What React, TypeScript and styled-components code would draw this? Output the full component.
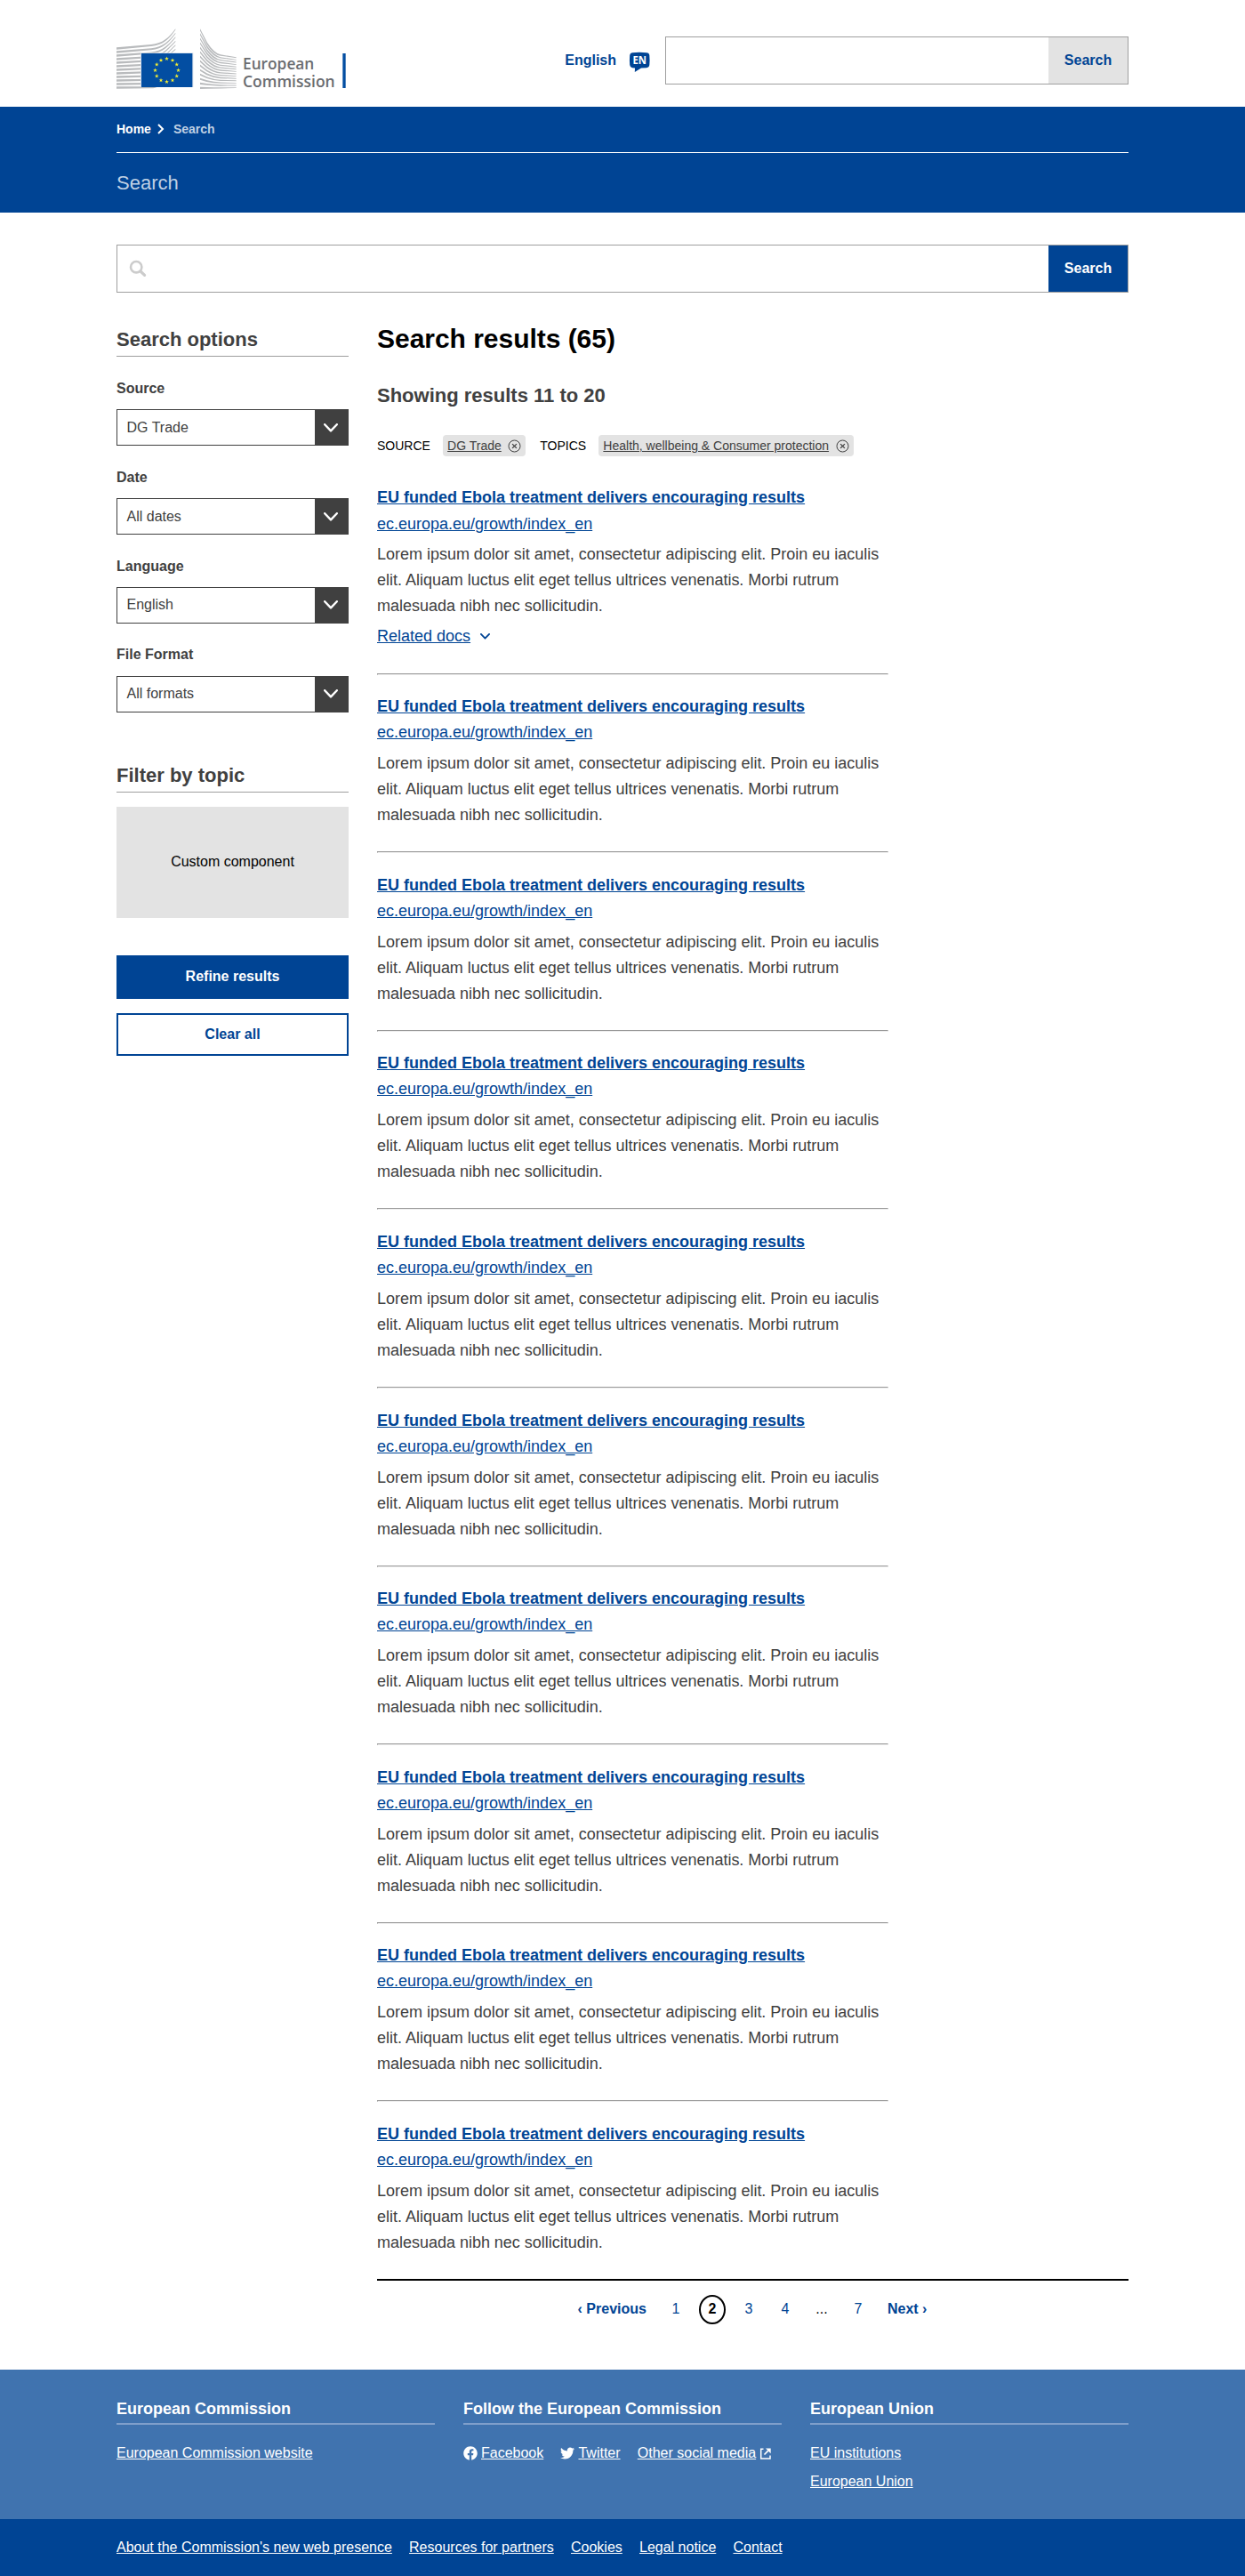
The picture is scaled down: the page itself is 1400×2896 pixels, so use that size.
import React from "react";
import styled, { createGlobalStyle, css } from "styled-components";
import { FaFacebook, FaTwitter } from "react-icons/fa";

const blue = "#004494";
const grey = "#404040";
const midGrey = "#9f9f9f";
const lightGrey = "#e3e3e3";

const GlobalStyle = createGlobalStyle`
  *, *::before, *::after { box-sizing: border-box; }
  body {
    margin: 0;
    background: #fff;
    color: ${grey};
    font-family: Arial, "Liberation Sans", sans-serif;
    font-size: 16px;
    line-height: 19px;
  }
  h1, h2, h3, p, ul { margin: 0; padding: 0; }
  ul { list-style: none; }
  svg { display: block; flex: none; }
`;

const Container = styled.div`
  width: 1138px;
  margin: 0 auto;
`;

/* ---------- header ---------- */

const HeaderBar = styled(Container)`
  display: flex;
  align-items: flex-start;
  height: 120px;
`;

const Logo = styled.a`
  margin-top: 31px;
`;

const LanguageLink = styled.a`
  display: flex;
  align-items: flex-start;
  gap: 14px;
  margin: 58px 17px 0 auto;
  color: ${blue};
  font-weight: 700;
`;

const SearchForm = styled.form<{ $width: string }>`
  display: flex;
  width: ${(p) => p.$width};
  height: 54px;
  border: 1px solid ${midGrey};
  background: #fff;
`;

const SearchField = styled.label`
  display: flex;
  flex: 1;
  align-items: center;
  padding-left: 13px;
`;

const SearchInput = styled.input`
  flex: 1;
  min-width: 0;
  border: 0;
  outline: 0;
  font: inherit;
  background: transparent;
`;

const SearchButton = styled.button<{ $primary?: boolean }>`
  width: 89px;
  border: 0;
  padding: 0 0 1px;
  font: inherit;
  font-weight: 700;
  color: ${(p) => (p.$primary ? "#fff" : blue)};
  background: ${(p) => (p.$primary ? blue : lightGrey)};
`;

const HeaderSearch = styled.div`
  margin-top: 41px;
`;

/* ---------- banner ---------- */

const Banner = styled.div`
  height: 119px;
  background: ${blue};
  color: #bfd0e4;
`;

const Breadcrumb = styled.nav`
  display: flex;
  align-items: center;
  height: 52px;
  padding-bottom: 2px;
  border-bottom: 1px solid #fff;
  font-size: 14px;
  font-weight: 700;
  line-height: 16px;
`;

const HomeLink = styled.a`
  margin-right: 7px;
  color: #fff;
`;

const Current = styled.span`
  margin-left: 10px;
`;

const BannerTitle = styled.div`
  padding-top: 21px;
  font-size: 22px;
  line-height: 25px;
`;

/* ---------- page body ---------- */

const Main = styled(Container)`
  padding-top: 36px;
`;

const Columns = styled.div`
  display: grid;
  grid-template-columns: 261px 845px;
  column-gap: 32px;
  height: 2335px;
`;

const Sidebar = styled.aside`
  padding-top: 40px;
`;

const SideHeading = styled.h2`
  padding-bottom: 6px;
  border-bottom: 1px solid ${midGrey};
  font-size: 22px;
  line-height: 25px;
`;

const Fields = styled.div`
  display: flex;
  flex-direction: column;
  gap: 25.45px;
  padding: 26.1px 0 58.3px;
`;

const Field = styled.div`
  display: flex;
  flex-direction: column;
  gap: 14.3px;
`;

const Label = styled.div`
  font-weight: 700;
`;

const Select = styled.div`
  display: flex;
  height: 41px;
  border: 1px solid ${grey};
`;

const SelectValue = styled.div`
  flex: 1;
  padding: 9.5px 0 0 10.5px;
`;

const SelectArrow = styled.div`
  display: flex;
  align-items: center;
  justify-content: center;
  width: 37px;
  padding-right: 1px;
  background: ${grey};
`;

const CustomBox = styled.div`
  display: flex;
  align-items: center;
  justify-content: center;
  height: 125px;
  margin: 16px 0 42px;
  padding-bottom: 2px;
  background: ${lightGrey};
  color: #000;
`;

const Button = styled.button<{ $outline?: boolean }>`
  display: block;
  width: 100%;
  height: 49px;
  padding: 0 0 1px;
  border: 2px solid ${blue};
  background: ${blue};
  color: #fff;
  font: inherit;
  font-weight: 700;
  ${(p) =>
    p.$outline &&
    css`
      height: 48px;
      margin-top: 16px;
      background: #fff;
      color: ${blue};
    `}
`;

/* ---------- results ---------- */

const Results = styled.main`
  padding-top: 34px;
`;

const PageHeading = styled.h1`
  color: #000;
  font-size: 30px;
  line-height: 35px;
  letter-spacing: -0.03px;
`;

const Showing = styled.h2`
  margin-top: 34px;
  font-size: 22px;
  line-height: 25px;
`;

const FilterRow = styled.div`
  display: flex;
  align-items: center;
  margin-top: 32px;
  font-size: 14px;
  line-height: 16px;
`;

const FilterName = styled.span`
  color: #000;
`;

const Tag = styled.span`
  display: flex;
  align-items: center;
  gap: 7.5px;
  height: 24px;
  margin: 0 16px 0 14.2px;
  padding: 0 5px;
  border-radius: 4px;
  background: ${lightGrey};
  text-decoration: underline;
`;

const List = styled.div`
  width: 575px;
  margin-top: 32.2px;
  font-size: 18px;
  line-height: 29px;
`;

const Divider = styled.hr`
  height: 2px;
  margin: 0 0 21.6px;
  border: 1px solid;
  border-color: #999 #eee #eee #999;
`;

const Result = styled.article`
  padding-bottom: 26px;
`;

const ResultTitle = styled.h3<{ $first?: boolean }>`
  color: ${blue};
  font-size: 18px;
  text-decoration: underline;
  padding-bottom: ${(p) => (p.$first ? 1 : 0)}px;
`;

const ResultUrl = styled.a`
  display: block;
  color: ${blue};
  text-decoration: underline;
`;

const Summary = styled.p<{ $first?: boolean }>`
  padding-top: ${(p) => (p.$first ? 5 : 6)}px;
  letter-spacing: -0.015px;
`;

const Related = styled.div`
  display: flex;
  align-items: center;
  gap: 11px;
  padding: 5px 0 0.4px;
  color: ${blue};
  span { text-decoration: underline; }
`;

const Pagination = styled.nav`
  display: flex;
  justify-content: center;
  gap: 18px;
  padding: 16px 1px 0 0;
  border-top: 2px solid #000;
  color: ${blue};
`;

const Pages = styled.div`
  display: flex;
  gap: 11px;
`;

const Page = styled.span<{ $kind?: "current" | "gap" }>`
  display: flex;
  align-items: center;
  justify-content: center;
  width: 30px;
  height: 33px;
  padding-bottom: 2px;
  ${(p) => p.$kind === "gap" && css`color: #000;`}
  ${(p) =>
    p.$kind === "current" &&
    css`
      border: 2px solid #000;
      border-radius: 50%;
      color: #000;
      font-weight: 700;
    `}
`;

const Step = styled.a`
  padding-top: 6px;
  font-weight: 700;
`;

/* ---------- footer ---------- */

const FooterTop = styled.footer`
  height: 168px;
  padding-top: 33px;
  background: #4073af;
  color: #fff;
`;

const FooterColumns = styled(Container)`
  display: grid;
  grid-template-columns: repeat(3, 358px);
  column-gap: 32px;
`;

const FooterHeading = styled.h3`
  margin-bottom: 22px;
  padding-bottom: 5px;
  border-bottom: 2px solid #7f9fcb;
  font-size: 18px;
  line-height: 22px;
`;

const LinkList = styled.ul<{ $row?: boolean }>`
  display: flex;
  flex-direction: ${(p) => (p.$row ? "row" : "column")};
  gap: ${(p) => (p.$row ? "19.2px" : "13px")};
`;

const LinkItem = styled.li`
  display: flex;
  align-items: center;
  gap: 4px;
  white-space: nowrap;
`;

const Link = styled.a`
  text-decoration: underline;
`;

const FooterBottom = styled.div`
  height: 64px;
  padding-top: 22px;
  background: ${blue};
  color: #fff;
`;

/* ---------- drawings ---------- */

const leftBands = Array.from({ length: 12 }, (_, i) => {
  const y = 100 + i * 12;
  const end = 37 + i * 13.5;
  const bend = Math.max(0, 1 - i / 11);
  const c1 = y - 10 * bend;
  const c2 = y - 14 * bend;
  return `M33 ${y} L150 ${c1} C190 ${c2} 210 ${end + 30 * bend} 232 ${end}
    L232 ${end + 3.5} C210 ${end + 36 * bend} 190 ${c2 + 6} 150 ${c1 + 6} L33 ${y + 7} Z`;
});

const rightBands = Array.from({ length: 14 }, (_, i) => {
  const y = 37 + i * 15.1;
  const end = 133 + i * 7.8;
  const k = 1 - i / 13;
  const kneeY = end - 12 * k;
  const midY = y + (kneeY - y) * 0.55;
  return `M315 ${y} L339 ${midY} Q362 ${kneeY - 2 * k} 384 ${end - 9 * k} L437 ${end}
    V${end + 2.8} L384 ${end - 9 * k + 4} Q360 ${kneeY + 4} 337 ${midY + 5} L315 ${y + 6.5} Z`;
});

const starPoints = (cx: number, cy: number, r: number) =>
  Array.from({ length: 10 }, (_, i) => {
    const radius = i % 2 ? r * 0.4 : r;
    const a = -Math.PI / 2 + (i * Math.PI) / 5;
    return `${(cx + radius * Math.cos(a)).toFixed(2)},${(cy + radius * Math.sin(a)).toFixed(2)}`;
  }).join(" ");

const CommissionLogo = () => (
  <svg width="260" height="80" viewBox="33 33 780 240" aria-label="European Commission">
    <g fill="#b9bbbd">
      {leftBands.map((d, i) => <path key={i} d={d} />)}
      {rightBands.map((d, i) => <path key={i} d={d} />)}
    </g>
    <rect x="114" y="118" width="178" height="116" fill="#d5deea" />
    <rect x="117" y="120" width="172" height="114" fill="#034ea2" />
    {Array.from({ length: 12 }, (_, i) => {
      const a = (i * Math.PI) / 6;
      return (
        <polygon
          key={i}
          points={starPoints(202.5 + 39 * Math.sin(a), 177 - 39 * Math.cos(a), 7.6)}
          fill="#f5ee31"
        />
      );
    })}
    <g fill="#6b6d70" fontFamily='"Open Sans", "Noto Sans", sans-serif' fontSize="53" fontWeight="600">
      <text x="459" y="175" textLength="241" lengthAdjust="spacingAndGlyphs">European</text>
      <text x="459" y="235" textLength="311" lengthAdjust="spacingAndGlyphs">Commission</text>
    </g>
    <rect x="796" y="120" width="10" height="117" fill="#034ea2" />
  </svg>
);

const LanguageIcon = () => (
  <svg width="24" height="24" viewBox="0 0 24 24">
    <path
      d="M4 1.2Q12 .3 20 1.2Q23 1.500 23.300 4Q23.800 9.500 23.300 15Q23 17.800 20 18.200L14 18.600L6.800 23L7 18.500L4 18.200Q1.500 17.800 1.200 15Q.7 9.500 1.200 4Q1.500 1.500 4 1.200Z"
      fill={blue}
    />
    <text x="4.500" y="14.300" fontFamily='"Open Sans", sans-serif' fontSize="11.500" fontWeight="700" fill="#fff" textLength="15.500" lengthAdjust="spacingAndGlyphs">
      EN
    </text>
  </svg>
);

const SearchIcon = () => (
  <svg width="20" height="20" viewBox="0 0 20 20" fill="none" stroke="#cccccc" strokeLinecap="round">
    <circle cx="8.200" cy="8.200" r="6.200" strokeWidth="2.600" />
    <path d="M13 13L17.600 17.400" strokeWidth="3.200" />
  </svg>
);

const Chevron = ({ w, h, stroke, color }: { w: number; h: number; stroke: number; color: string }) => (
  <svg width={w} height={h} fill="none" stroke={color} strokeWidth={stroke} strokeLinecap="round" strokeLinejoin="round">
    <path d={`M${stroke / 2} ${stroke / 2}L${w / 2} ${h - stroke / 2 - 0.4}L${w - stroke / 2} ${stroke / 2}`} />
  </svg>
);

const CrumbArrow = () => (
  <svg width="8" height="12" viewBox="0 0 8 12" fill="none" stroke="#fff" strokeWidth="2">
    <path d="M1 1L6 6L1 11" />
  </svg>
);

const RemoveIcon = () => (
  <svg width="15" height="15" viewBox="0 0 15 15" fill="none" stroke={grey}>
    <circle cx="7.500" cy="7.500" r="6.500" strokeWidth="1" />
    <path d="M5.100 5.100L9.900 9.900M9.900 5.100L5.100 9.900" strokeWidth="1.300" />
  </svg>
);

const ExternalIcon = () => (
  <svg width="13" height="14" viewBox="0 0 13 14" fill="none" stroke="#fff">
    <path d="M4.500 2.300H1.700V13H12V9.500" strokeWidth="1.500" />
    <path d="M5.500 8.500L9.800 4.200" strokeWidth="1.700" />
    <path d="M7 1.500H12.700V7.200Z" fill="#fff" stroke="none" />
  </svg>
);

/* ---------- page ---------- */

const filters = [
  ["Source", "DG Trade"],
  ["Date", "All dates"],
  ["Language", "English"],
  ["File Format", "All formats"],
];

const legal = ["About the Commission's new web presence", "Resources for partners", "Cookies", "Legal notice", "Contact"];

const ResultItem = ({ first }: { first: boolean }) => (
  <>
    {!first && <Divider />}
    <Result>
      <ResultTitle $first={first}>EU funded Ebola treatment delivers encouraging results</ResultTitle>
      <ResultUrl>ec.europa.eu/growth/index_en</ResultUrl>
      <Summary $first={first}>
        Lorem ipsum dolor sit amet, consectetur adipiscing elit. Proin eu iaculis elit. Aliquam luctus elit eget
        tellus ultrices venenatis. Morbi rutrum malesuada nibh nec sollicitudin.
      </Summary>
      {first && (
        <Related>
          <span>Related docs</span>
          <Chevron w={11} h={7} stroke={1.8} color={blue} />
        </Related>
      )}
    </Result>
  </>
);

export default function App() {
  return (
    <>
      <GlobalStyle />
      <HeaderBar as="header">
        <Logo><CommissionLogo /></Logo>
        <LanguageLink>
          English
          <LanguageIcon />
        </LanguageLink>
        <HeaderSearch>
          <SearchForm $width="521px">
            <SearchField><SearchInput aria-label="Search site" /></SearchField>
            <SearchButton type="button">Search</SearchButton>
          </SearchForm>
        </HeaderSearch>
      </HeaderBar>

      <Banner>
        <Container>
          <Breadcrumb>
            <HomeLink>Home</HomeLink>
            <CrumbArrow />
            <Current>Search</Current>
          </Breadcrumb>
          <BannerTitle>Search</BannerTitle>
        </Container>
      </Banner>

      <Main>
        <SearchForm $width="100%">
          <SearchField>
            <SearchIcon />
            <SearchInput aria-label="Search results" />
          </SearchField>
          <SearchButton type="button" $primary>Search</SearchButton>
        </SearchForm>

        <Columns>
          <Sidebar>
            <SideHeading>Search options</SideHeading>
            <Fields>
              {filters.map(([label, value]) => (
                <Field key={label}>
                  <Label>{label}</Label>
                  <Select>
                    <SelectValue>{value}</SelectValue>
                    <SelectArrow>
                      <Chevron w={16} h={10} stroke={2.4} color="#fff" />
                    </SelectArrow>
                  </Select>
                </Field>
              ))}
            </Fields>
            <SideHeading>Filter by topic</SideHeading>
            <CustomBox>Custom component</CustomBox>
            <Button type="button">Refine results</Button>
            <Button type="button" $outline>Clear all</Button>
          </Sidebar>

          <Results>
            <PageHeading>Search results (65)</PageHeading>
            <Showing>Showing results 11 to 20</Showing>
            <FilterRow>
              <FilterName>SOURCE</FilterName>
              <Tag>DG Trade<RemoveIcon /></Tag>
              <FilterName>TOPICS</FilterName>
              <Tag>Health, wellbeing &amp; Consumer protection<RemoveIcon /></Tag>
            </FilterRow>
            <List>
              {Array.from({ length: 10 }, (_, i) => <ResultItem key={i} first={i === 0} />)}
            </List>
            <Pagination>
              <Step>‹ Previous</Step>
              <Pages>
                <Page>1</Page>
                <Page $kind="current">2</Page>
                <Page>3</Page>
                <Page>4</Page>
                <Page $kind="gap">...</Page>
                <Page>7</Page>
              </Pages>
              <Step>Next ›</Step>
            </Pagination>
          </Results>
        </Columns>
      </Main>

      <FooterTop>
        <FooterColumns>
          <section>
            <FooterHeading>European Commission</FooterHeading>
            <LinkList>
              <LinkItem><Link>European Commission website</Link></LinkItem>
            </LinkList>
          </section>
          <section>
            <FooterHeading>Follow the European Commission</FooterHeading>
            <LinkList $row>
              <LinkItem><FaFacebook size={16} /><Link>Facebook</Link></LinkItem>
              <LinkItem><FaTwitter size={16} /><Link>Twitter</Link></LinkItem>
              <LinkItem><Link>Other social media</Link><ExternalIcon /></LinkItem>
            </LinkList>
          </section>
          <section>
            <FooterHeading>European Union</FooterHeading>
            <LinkList>
              <LinkItem><Link>EU institutions</Link></LinkItem>
              <LinkItem><Link>European Union</Link></LinkItem>
            </LinkList>
          </section>
        </FooterColumns>
      </FooterTop>
      <FooterBottom>
        <Container>
          <LinkList $row>
            {legal.map((text) => <LinkItem key={text}><Link>{text}</Link></LinkItem>)}
          </LinkList>
        </Container>
      </FooterBottom>
    </>
  );
}
